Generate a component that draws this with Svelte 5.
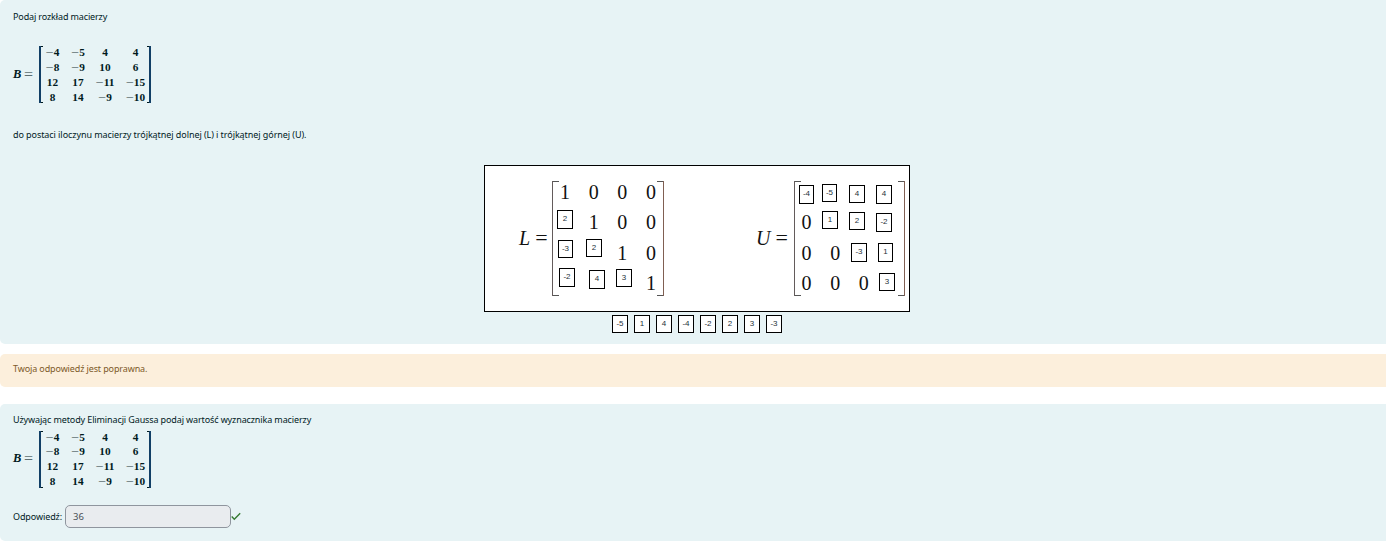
<script>
  const matrix = [
    [-4, -5, 4, 4],
    [-8, -9, 10, 6],
    [12, 17, -11, -15],
    [8, 14, -9, -10]
  ];
  const lower = [[1, 0, 0, 0], ['', 1, 0, 0], ['', '', 1, 0], ['', '', '', 1]];
  const upper = [['', '', '', ''], [0, '', '', ''], [0, 0, '', ''], [0, 0, 0, '']];

  // Dropped tokens: value, left, top, width, height on the board
  const dropped = [
    [2, 73, 45, 16, 19], [-3, 74, 75, 15, 18], [2, 102, 74, 16, 18],
    [-2, 75, 103, 16, 19], [4, 105, 105, 16, 19], [3, 132, 104, 16, 18],
    [-4, 315, 20, 15, 19], [-5, 338, 19, 15, 18], [4, 365, 20, 16, 18], [4, 392, 20, 16, 19],
    [1, 338, 46, 16, 18], [2, 365, 47, 16, 18], [-2, 392, 48, 16, 19],
    [-3, 367, 78, 16, 19], [1, 394, 78, 15, 19], [3, 395, 108, 16, 18]
  ];
  const bank = [-5, 1, 4, -4, -2, 2, 3, -3];
</script>

{#snippet bmatrix()}
  <div class="equation">
    <span class="name">B</span><span class="eq">=</span>
    <div class="bracketed">
      {#each matrix as row}
        {#each row as n}
          <span class="num">{#if n < 0}<span class="minus">−</span>{/if}{Math.abs(n)}</span>
        {/each}
      {/each}
    </div>
  </div>
{/snippet}

{#snippet factor(name, rows)}
  <div class="factor {name}">
    <span class="fname"><i>{name}</i><span>=</span></span>
    <div class="fgrid">
      {#each rows as row}
        {#each row as n}<span>{n}</span>{/each}
      {/each}
    </div>
  </div>
{/snippet}

<main>
  <section class="panel first">
    <p class="t1">Podaj rozkład macierzy</p>
    {@render bmatrix()}
    <p class="t2">do postaci iloczynu macierzy trójkątnej dolnej (L) i trójkątnej górnej (U).</p>
    <div class="board">
      {@render factor('L', lower)}
      {@render factor('U', upper)}
      {#each dropped as [v, x, y, w, h]}
        <span class="token placed" style="left:{x - 1}px;top:{y - 1}px;width:{w}px;height:{h}px">{v}</span>
      {/each}
    </div>
    <div class="bank">
      {#each bank as v}<span class="token">{v}</span>{/each}
    </div>
  </section>

  <section class="feedback"><p class="t3">Twoja odpowiedź jest poprawna.</p></section>

  <section class="panel second">
    <p class="t4">Używając metody Eliminacji Gaussa podaj wartość wyznacznika macierzy</p>
    {@render bmatrix()}
    <div class="answer">
      <label for="answer">Odpowiedź:</label>
      <input id="answer" value="36" readonly />
      <svg width="10" height="10" viewBox="0 0 10 10"><path d="M.7 4.6 3.3 7.2 9.2 1.3" fill="none" stroke="#357a32" stroke-width="1.4" /></svg>
    </div>
  </section>
</main>

<style>
  :global(body) { margin: 0; background: #fff; overflow: hidden; }
  main { height: 546px; font: 9px/14px "Noto Sans", sans-serif; color: #001a1e; }
  p { margin: 0; white-space: nowrap; width: max-content; }
  section { box-sizing: border-box; padding-left: 13px; }
  .panel { background: #e7f3f5; border-radius: 5px 0 0 5px; }
  .first { height: 344px; padding-top: 10px; }
  .second { height: 137px; margin-top: 17px; padding-top: 9px; }
  .feedback { height: 33px; margin-top: 10px; padding-top: 8px; background: #fcefdc; color: #7d5a29; border-radius: 5px 0 0 5px; }
  .t1 { letter-spacing: -.13px; }
  .t2 { letter-spacing: -.07px; }
  .t3 { letter-spacing: -.12px; }
  .t4 { letter-spacing: -.12px; }

  .equation { display: flex; align-items: center; height: 57px; font: bold 11px/15px "Liberation Serif", serif; }
  .first .equation { margin: 22px 0 25px; }
  .second .equation { margin-top: 4px; }
  .name { width: 11px; font-style: italic; font-size: 12.5px; }
  .eq { width: 15px; font-weight: normal; font-size: 16px; color: #5d6d70; }
  .bracketed {
    box-sizing: border-box; width: 112px; height: 57px; padding: 0 0 0 1px;
    display: grid; grid-template-columns: 26px 25px 29px 32px; grid-template-rows: 12px 18px 13px 16px;
    justify-content: center; text-align: center; align-items: center;
    border-left: 2px solid #123f66; border-right: 2px solid #123f66;
    background: linear-gradient(#001a1e, #001a1e) 0 0/2px 1px no-repeat, linear-gradient(#001a1e, #001a1e) 100% 0/2px 1px no-repeat,
      linear-gradient(#001a1e, #001a1e) 0 100%/2px 1px no-repeat, linear-gradient(#001a1e, #001a1e) 100% 100%/2px 1px no-repeat;
  }
  .second .bracketed { grid-template-rows: 13px 15px 15px 15px; }
  .second .name, .second .eq { position: relative; top: -1px; }
  .num { display: flex; justify-content: center; font-size: 11.3px; }
  .minus { font-weight: normal; font-size: 14px; width: 8px; color: #5d6d70; }

  .board { position: relative; box-sizing: border-box; width: 426px; height: 147px; margin: 23px 0 0 471px; border: 1px solid #000; background: #fff; display: flex; padding: 15px 0 0 34px; font: 20px/30px "Liberation Serif", serif; color: #111; }
  .factor { display: flex; height: 116px; }
  .factor.U { margin-left: 92px; }
  .fname { display: flex; gap: 5px; width: 33px; padding-top: 42px; }
  .fname span { font-size: 22px; }
  .U .fname { width: 38px; }
  .fgrid {
    box-sizing: border-box; width: 112px; height: 115px; display: grid;
    grid-template: repeat(4, 30.3px) / repeat(4, 28.7px); justify-content: center; text-align: center;
    border-left: 1px solid #635b5b; border-right: 1px solid #805f52;
    background: linear-gradient(#555, #555) 0 0/6px 1px no-repeat, linear-gradient(#555, #555) 100% 0/6px 1px no-repeat,
      linear-gradient(#555, #555) 0 100%/6px 1px no-repeat, linear-gradient(#555, #555) 100% 100%/6px 1px no-repeat;
  }
  .U .fgrid { width: 111px; }
  .fgrid span { transform: translateY(-4px); }
  .token { box-sizing: border-box; width: 16px; height: 18px; border: 1px solid #000; background: #fff; color: #25323a; font: 8px/16px "Liberation Sans", sans-serif; text-align: center; }
  .placed { position: absolute; }
  .bank { display: flex; gap: 6px; margin: 3px 0 0 599px; }

  .answer { display: flex; align-items: center; margin-top: 17px; height: 23px; letter-spacing: -.1px; }
  label { width: 52px; }
  input { box-sizing: border-box; width: 166px; height: 23px; padding: 0 7px; border: 1px solid #8f959e; border-radius: 5px; background: #e9ecef; color: #495057; font: 9.5px "Noto Sans", sans-serif; }
</style>
